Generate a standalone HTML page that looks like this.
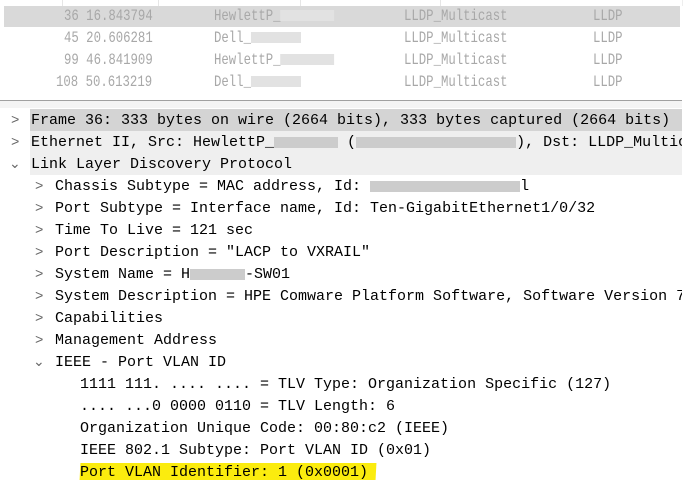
<!DOCTYPE html><html><head><style>
body{margin:0;width:697px;height:497px;background:#fff;overflow:hidden;position:relative;font-family:"Liberation Mono",monospace;}
.top{position:absolute;left:0;width:682px;height:22px;font-family:"Liberation Mono",monospace;font-size:16px;color:#a8a8a8;line-height:22px}
.top span{position:absolute;white-space:pre;transform:scaleX(0.77);transform-origin:0 50%}
.blur{display:inline-block;height:11px;background:#e2e2e2;vertical-align:middle}
.r{position:absolute;left:0;width:682px;height:22px;line-height:22px;font-size:15px;color:#000;white-space:pre}
.r .a{position:absolute;color:#666;font-size:14px}
.r .t{position:absolute}
</style></head><body>
<div style="position:absolute;left:0;top:0;width:682px;height:6px;border-right:1px solid #eee"></div>
<div style="position:absolute;left:62px;top:0;width:1px;height:6px;background:#e6e6e6"></div>
<div style="position:absolute;left:158px;top:0;width:1px;height:6px;background:#e6e6e6"></div>
<div style="position:absolute;left:300px;top:0;width:1px;height:6px;background:#e6e6e6"></div>
<div style="position:absolute;left:440px;top:0;width:1px;height:6px;background:#e6e6e6"></div>
<div style="position:absolute;left:4px;top:6px;width:676px;height:21px;background:#d9d9d9"></div>
<div class="top" style="top:5px"><span style="left:64px">36 16.843794</span><span style="left:214px">HewlettP_<i class="blur" style="width:70px"></i></span><span style="left:404px">LLDP_Multicast</span><span style="left:593px">LLDP</span></div>
<div class="top" style="top:27px"><span style="left:64px">45 20.606281</span><span style="left:214px">Dell_<i class="blur" style="width:65px"></i></span><span style="left:404px">LLDP_Multicast</span><span style="left:593px">LLDP</span></div>
<div class="top" style="top:49px"><span style="left:64px">99 46.841909</span><span style="left:214px">HewlettP_<i class="blur" style="width:70px"></i></span><span style="left:404px">LLDP_Multicast</span><span style="left:593px">LLDP</span></div>
<div class="top" style="top:71px"><span style="left:56px">108 50.613219</span><span style="left:214px">Dell_<i class="blur" style="width:65px"></i></span><span style="left:404px">LLDP_Multicast</span><span style="left:593px">LLDP</span></div>
<div style="position:absolute;left:0;top:100px;width:682px;height:1px;background:#a0a0a0"></div>
<div style="position:absolute;left:0;top:101px;width:682px;height:7px;background:#f4f4f4"></div>
<div style="position:absolute;left:30px;top:109px;width:652px;height:22px;background:#d4d4d4"></div>
<div style="position:absolute;left:30px;top:131px;width:652px;height:44px;background:#efefef"></div>
<div style="position:absolute;left:80px;top:463px;width:296px;height:17px;background:#fbec0e;transform:skewX(-3deg)"></div>
<div style="position:absolute;left:0;top:110px;width:682px;height:390px;overflow:hidden">
<div class="r" style="top:0"><span class="a" style="left:11px">&gt;</span><span class="t" style="left:31px">Frame 36: 333 bytes on wire (2664 bits), 333 bytes captured (2664 bits)</span></div>
<div class="r" style="top:22px"><span class="a" style="left:11px">&gt;</span><span class="t" style="left:31px">Ethernet II, Src: HewlettP_<i class="blur" style="width:64px;background:#ccc"></i> (<i class="blur" style="width:160px;background:#ccc"></i>), Dst: LLDP_Multicast</span></div>
<div class="r" style="top:44px"><span class="a" style="left:9px">⌄</span><span class="t" style="left:31px">Link Layer Discovery Protocol</span></div>
<div class="r" style="top:66px"><span class="a" style="left:35px">&gt;</span><span class="t" style="left:55px">Chassis Subtype = MAC address, Id: <i class="blur" style="width:150px;background:#ccc"></i>l</span></div>
<div class="r" style="top:88px"><span class="a" style="left:35px">&gt;</span><span class="t" style="left:55px">Port Subtype = Interface name, Id: Ten-GigabitEthernet1/0/32</span></div>
<div class="r" style="top:110px"><span class="a" style="left:35px">&gt;</span><span class="t" style="left:55px">Time To Live = 121 sec</span></div>
<div class="r" style="top:132px"><span class="a" style="left:35px">&gt;</span><span class="t" style="left:55px">Port Description = "LACP to VXRAIL"</span></div>
<div class="r" style="top:154px"><span class="a" style="left:35px">&gt;</span><span class="t" style="left:55px">System Name = H<i class="blur" style="width:55px;background:#ccc"></i>-SW01</span></div>
<div class="r" style="top:176px"><span class="a" style="left:35px">&gt;</span><span class="t" style="left:55px">System Description = HPE Comware Platform Software, Software Version 7</span></div>
<div class="r" style="top:198px"><span class="a" style="left:35px">&gt;</span><span class="t" style="left:55px">Capabilities</span></div>
<div class="r" style="top:220px"><span class="a" style="left:35px">&gt;</span><span class="t" style="left:55px">Management Address</span></div>
<div class="r" style="top:242px"><span class="a" style="left:33px">⌄</span><span class="t" style="left:55px">IEEE - Port VLAN ID</span></div>
<div class="r" style="top:264px"><span class="t" style="left:80px">1111 111. .... .... = TLV Type: Organization Specific (127)</span></div>
<div class="r" style="top:286px"><span class="t" style="left:80px">.... ...0 0000 0110 = TLV Length: 6</span></div>
<div class="r" style="top:308px"><span class="t" style="left:80px">Organization Unique Code: 00:80:c2 (IEEE)</span></div>
<div class="r" style="top:330px"><span class="t" style="left:80px">IEEE 802.1 Subtype: Port VLAN ID (0x01)</span></div>
<div class="r" style="top:352px"><span class="t" style="left:80px">Port VLAN Identifier: 1 (0x0001)</span></div>
</div>
</body></html>
